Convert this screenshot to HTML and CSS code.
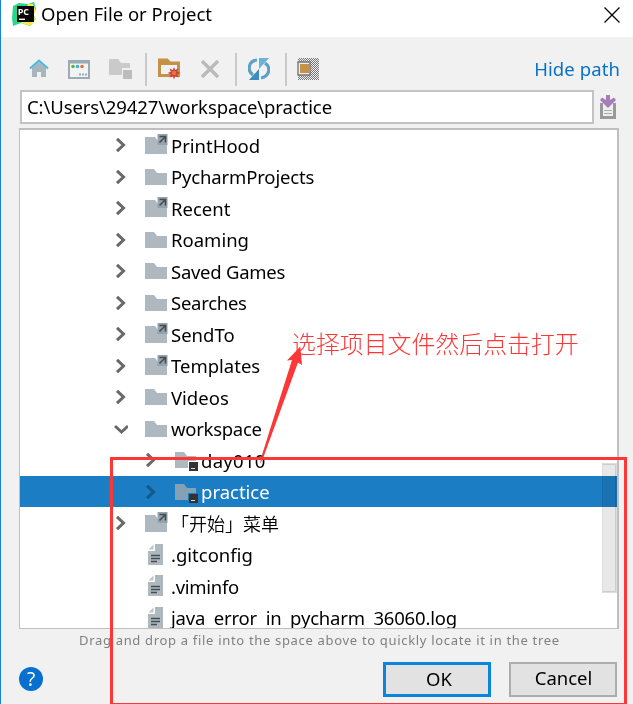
FILE: index.html
```html
<!DOCTYPE html>
<html lang="en">
<head>
<meta charset="utf-8">
<title>Open File or Project</title>
<link rel="stylesheet" href="styles.css">
</head>
<body>
<svg class="defs" width="0" height="0" aria-hidden="true">
  <symbol id="folder" viewBox="0 0 24 22"><path d="M0 3H9L12 7H22V19H0Z"/></symbol>
  <symbol id="link" viewBox="0 0 24 22"><path d="M0 3H10L13 7H22V20H0Z"/><path d="M12.5 0H22.5V11H12.5Z" fill="#95a2ac"/><path d="M14.5 2.5H20.5V8.5M20 3L14.5 8.5" fill="none" stroke="#444c53" stroke-width="1.6"/></symbol>
  <symbol id="project" viewBox="0 0 24 22"><path d="M0 3H9L12 7H21V12H13V19H0Z"/><path class="chip" d="M14 13H23V22H14Z"/><path d="M16 19H20V20H16Z" fill="#ddd"/></symbol>
  <symbol id="doc" viewBox="0 0 24 22"><path d="M10 0H18V21H3V7H10Z"/><path d="M3.5 5.5L8.5 .5V5.5Z" fill="#bcc5cb"/><path d="M6 11.5H15M6 14.5H15M6 17.5H12" stroke="#474d52" stroke-width="1.4"/></symbol>
  <symbol id="right" viewBox="0 0 14 14"><path d="M3 .8L9.5 7L3 13.2" fill="none" stroke-width="3"/></symbol>
  <symbol id="down" viewBox="0 0 14 14"><path d="M1 4L7.5 10L14 4" fill="none" stroke-width="3"/></symbol>
</svg>
<div class="window">
  <header class="title">
    <svg class="app" width="25" height="25" viewBox="0 0 25 25"><path d="M1 4L7 1 16 2 22 0 24 7 21 12 24 17 18 24 9 21 1 24 0 16Z" fill="#2ad68c"/><path d="M16 2L21 2 24 9 21 13 24 17 19 24 9 21Z" fill="#f3ee4c"/><path d="M5 4H22V20H5Z" fill="#080808"/><path d="M7 17.3H13" stroke="#fff" stroke-width="1.4"/><text class="logo" x="5.7" y="13">PC</text></svg>
    <h1>Open File or Project</h1>
    <svg class="close" width="16" height="16" viewBox="0 0 16 16"><path d="M.5 .5L15.5 15.5M15.5 .5L.5 15.5" stroke="#000" stroke-width="1.3"/></svg>
  </header>
  <div class="toolbar">
    <svg class="home" width="20" height="20" viewBox="0 0 20 20"><path d="M3 9L10 3L17 9V18H12V13H8V18H3Z" fill="#a9b5bd"/><path d="M1 9.5L10 1.5L19 9.5" fill="none" stroke="#47b8dd" stroke-width="2"/></svg>
    <svg class="desk" width="22" height="19" viewBox="0 0 22 19"><path d="M1 1H21V18H1Z" fill="#f2f3f3" stroke="#9aabb5" stroke-width="2"/><path d="M1 2H21" stroke="#9aabb5" stroke-width="3"/><circle cx="5" cy="6.5" r="1.8" fill="#5bb544"/><circle cx="9.5" cy="6.5" r="1.8" fill="#3cb1d8"/><circle cx="14" cy="6.5" r="1.8" fill="#f26a3d"/><path d="M11 14.5H19" stroke="#9aabb5" stroke-width="2" stroke-dasharray="2 1"/></svg>
    <svg class="proj" width="24" height="22" viewBox="0 0 24 22"><path d="M0 1H9L12 5H21V10H13V17H0Z" fill="#cacaca"/><path d="M14 12H23V21H14Z" fill="#bcbcbc"/></svg>
    <i class="sep s1"></i>
    <svg class="newf" width="24" height="22" viewBox="0 0 24 22"><path d="M1.5 2H9L12 5H20.5V17.5H1.5Z" fill="#f1f1f1" stroke="#c39148" stroke-width="3"/><path d="M0 1H9L12 4H22V7H0Z" fill="#c39148"/><path d="M16 9L17.2 12 20.5 10.5 19.2 13.8 22.5 15 19.2 16.2 20.5 19.5 17.2 18.2 16 21.5 14.8 18.2 11.5 19.5 12.8 16.2 9.5 15 12.8 13.8 11.5 10.5 14.8 12Z" fill="#c94632"/><circle cx="16" cy="15" r="2.2" fill="#f06c50"/></svg>
    <svg class="del" width="18" height="18" viewBox="0 0 18 18"><path d="M1 1L17 17M17 1L1 17" stroke="#bababa" stroke-width="3.4"/></svg>
    <i class="sep s2"></i>
    <svg class="sync" width="22" height="22" viewBox="0 0 22 22"><path d="M9 2C0 3-1 13 5 17M13 20C22 18 23 9 17 5" fill="none" stroke="#5aa0c8" stroke-width="3.2"/><path d="M11 0H21L11 11Z" fill="#6bb3d9"/><path d="M11 11V22H1Z" fill="#3c8cbc"/></svg>
    <i class="sep s3"></i>
    <svg class="hidden-files" width="23" height="22" viewBox="0 0 23 22"><defs><pattern id="dots" width="2" height="2" patternUnits="userSpaceOnUse"><path d="M0 0H1V1H0ZM1 1H2V2H1Z" fill="#777"/></pattern></defs><path d="M1 0H22V22H1Z" fill="url(#dots)"/><path d="M1 4H13V17H1Z" fill="#eee" stroke="#777" stroke-width="1.4"/><path d="M3 6H12V15H3Z" fill="#c5924b"/></svg>
    <a class="hide">Hide path</a>
  </div>
  <div class="path">
    <div class="field"><span>C:\Users\29427\workspace\practice</span></div>
    <svg width="18" height="24" viewBox="0 0 18 24"><path d="M1 8H17V24H1Z" fill="#999"/><path d="M4 6H14V21H4Z" fill="#efefef"/><path d="M5 15.5H13M5 18.5H13" stroke="#aaa" stroke-width="1.2"/><path d="M7 0H11V5L15 2.5 17 5 9 13 1 5 3 2.5 7 5Z" fill="#a67dbb"/></svg>
  </div>
  <div class="tree">
    <div class="rows">
      <div class="row"><svg class="arrow"><use href="#right"/></svg><svg class="icon"><use href="#link"/></svg><span>PrintHood</span></div>
      <div class="row"><svg class="arrow"><use href="#right"/></svg><svg class="icon"><use href="#folder"/></svg><span class="snug">PycharmProjects</span></div>
      <div class="row"><svg class="arrow"><use href="#right"/></svg><svg class="icon"><use href="#link"/></svg><span>Recent</span></div>
      <div class="row"><svg class="arrow"><use href="#right"/></svg><svg class="icon"><use href="#folder"/></svg><span>Roaming</span></div>
      <div class="row"><svg class="arrow"><use href="#right"/></svg><svg class="icon"><use href="#folder"/></svg><span class="tight">Saved Games</span></div>
      <div class="row"><svg class="arrow"><use href="#right"/></svg><svg class="icon"><use href="#folder"/></svg><span class="tight">Searches</span></div>
      <div class="row"><svg class="arrow"><use href="#right"/></svg><svg class="icon"><use href="#link"/></svg><span>SendTo</span></div>
      <div class="row"><svg class="arrow"><use href="#right"/></svg><svg class="icon"><use href="#link"/></svg><span>Templates</span></div>
      <div class="row"><svg class="arrow"><use href="#right"/></svg><svg class="icon"><use href="#folder"/></svg><span>Videos</span></div>
      <div class="row"><svg class="arrow"><use href="#down"/></svg><svg class="icon"><use href="#folder"/></svg><span class="tight">workspace</span></div>
      <div class="row child"><svg class="arrow"><use href="#right"/></svg><svg class="icon"><use href="#project"/></svg><span class="loose">day010</span></div>
      <div class="row child selected"><svg class="arrow"><use href="#right"/></svg><svg class="icon"><use href="#project"/></svg><span>practice</span></div>
      <div class="row"><svg class="arrow"><use href="#right"/></svg><svg class="icon"><use href="#link"/></svg><span class="zh">「开始」菜单</span></div>
      <div class="row file"><svg class="icon"><use href="#doc"/></svg><span>.gitconfig</span></div>
      <div class="row file"><svg class="icon"><use href="#doc"/></svg><span class="tight">.viminfo</span></div>
      <div class="row file"><svg class="icon"><use href="#doc"/></svg><span class="log">java error in pycharm 36060.log</span></div>
    </div>
    <div class="scrollbar"></div>
  </div>
  <p class="hint">Drag and drop a file into the space above to quickly locate it in the tree</p>
  <footer>
    <div class="help">?</div>
    <button class="ok">OK</button>
    <button>Cancel</button>
  </footer>
  <svg class="pointer" width="50" height="120" viewBox="0 0 50 120"><path d="M40.3 .5L27 14.5L32 14L1 112L0 118L3.5 111L38 16.5L42 19Z" fill="#fb3737"/></svg>
  <div class="note">选择项目文件然后点击打开</div>
  <div class="frame"></div>
</div>
</body>
</html>
```

FILE: styles.css
```css
* { box-sizing: border-box; }
body { margin: 0; overflow: hidden; background: #f1f1f1; color: #000; font-family: "Noto Sans", "Noto Sans CJK SC", sans-serif; font-size: 18.5px; }
svg { display: block; flex: none; }
.defs { position: absolute; }
.window { position: relative; width: 633px; height: 704px; overflow: hidden; border-left: 1px solid #1883d7; }
.title { display: flex; height: 37px; padding: 2px 13px 0 11px; background: #fff; }
.title h1 { margin: 0 auto 0 4px; font-size: 18.5px; font-weight: 400; line-height: 24px; white-space: nowrap; }
.logo { font: 700 9px "Open Sans", sans-serif; fill: #fff; }
.close { margin-top: 5px; }
.toolbar { display: flex; align-items: center; height: 53px; padding: 11px 12px 0 28px; }
.desk { margin-left: 19px; }
.proj { margin-left: 19px; }
.sep { width: 2px; height: 33px; background: #c9c9c9; }
.s1 { margin-left: 12px; }
.newf { margin-left: 11px; }
.del { margin-left: 19px; }
.s2 { margin-left: 16px; }
.sync { margin-left: 11px; }
.s3 { margin-left: 15px; }
.hidden-files { margin-left: 10px; }
.hide { margin: 0 1px 2px auto; color: #0871c7; letter-spacing: .1px; white-space: nowrap; }
.path { display: flex; align-items: center; gap: 5px; padding-left: 19px; height: 34px; }
.field { width: 574px; height: 34px; padding-left: 5px; border: 2px solid #c3c3c3; background: #fff; line-height: 29px; letter-spacing: -.1px; white-space: nowrap; }
.tree { position: relative; width: 600px; height: 501px; margin: 4px 0 0 18px; overflow: hidden; border: solid #bfbfbf; border-width: 2px 2px 1px 1px; background: #fff; }
.rows { margin-top: -.6px; }
.row { display: flex; align-items: center; height: 31.5px; padding-left: 94px; white-space: nowrap; }
.row span { margin-left: 2px; line-height: 31px; }
.row .snug { letter-spacing: -.15px; }
.row .tight { letter-spacing: -.27px; }
.row .loose { letter-spacing: .3px; }
.row .log { letter-spacing: -.19px; word-spacing: 4px; }
.arrow { width: 14px; height: 14px; overflow: visible; stroke: #696969; }
.icon { width: 24px; height: 22px; margin-left: 17px; fill: #adb8c0; }
.chip { fill: #333; }
.child { padding-left: 124px; }
.file .icon { margin-left: 31px; }
.selected { background: #1b7dc4; color: #fff; }
.selected .icon { fill: #84a1b6; }
.selected .arrow { stroke: #165888; }
.scrollbar { position: absolute; top: 333px; right: 0; width: 15px; height: 130px; border: 1px solid #ddd; background: rgba(0,0,0,.09); box-shadow: inset -1px 0 #ccc, inset 0 1px #ccc, inset 0 -1px #ccc; mix-blend-mode: multiply; }
.row .zh { font-family: "Noto Sans CJK SC", sans-serif; font-size: 18px; font-weight: 350; }
.hint { height: 22px; margin: 0 0 0 78px; color: #808080; font-size: 13px; line-height: 22px; letter-spacing: .68px; white-space: nowrap; }
footer { display: flex; height: 53px; padding: 11px 16px 0 18px; }
.help { width: 24px; height: 24px; margin: 5px auto 0 0; border-radius: 50%; background: #0871cf; color: #fff; font-size: 19px; line-height: 24px; text-align: center; }
button { width: 108px; height: 35px; margin: 0; padding: 0 0 3px 1px; border: 2px solid #adadad; background: #e2e2e2; color: #000; font: inherit; line-height: 28px; }
.ok { margin-right: 18px; padding-left: 4px; border: 3px solid #0b84dc; }
.pointer { position: absolute; left: 259px; top: 346px; }
.note { position: absolute; left: 291px; top: 326px; color: #fb3737; font: 300 23.9px/34px "Noto Sans CJK SC", sans-serif; white-space: nowrap; }
.frame { position: absolute; left: 109px; top: 457px; width: 517px; height: 247px; border: 3px solid #fb3737; border-bottom-width: 1px; }
```
